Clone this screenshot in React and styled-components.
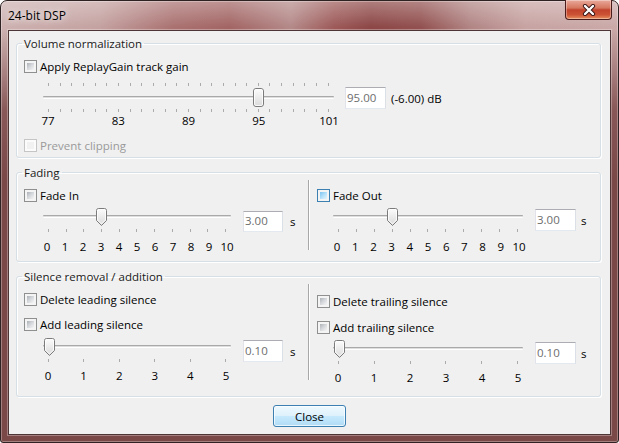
import React from 'react';
import styled, { createGlobalStyle } from 'styled-components';

const Global = createGlobalStyle`
  html, body { margin: 0; padding: 0; background: #ffffff; }
  body {
    font-family: "Open Sans", "Noto Sans", "DejaVu Sans", sans-serif;
    font-size: 11.5px;
    color: #000;
  }
  * { box-sizing: border-box; }
`;

const TITLE_GRADIENT = `linear-gradient(90deg, #cdb2b1 0%, #c4a2a1 16%, #aa7271 28%, #a26564 37%, #b48a89 47%, #9d5a59 54%, #8c4746 60%, #925150 68%, #b18584 76%, #c7a3a2 85%, #caa9a8 100%)`;

const Window = styled.div`
  width: 619px;
  height: 443px;
  display: flex;
  flex-direction: column;
  padding: 0 7px 7px;
  border: 1px solid #2f2222;
  border-radius: 7px 7px 3px 3px;
  background:
    linear-gradient(180deg, rgba(255,255,255,0.3) 0px, rgba(255,255,255,0) 26px),
    linear-gradient(180deg, rgba(124,72,72,0) 28px, rgba(124,72,72,0.85) 110px, #7b4848 180px),
    ${TITLE_GRADIENT};
  box-shadow: inset 0 0 0 1px rgba(255,255,255,0.3);
`;

const TitleBar = styled.div`
  height: 29px;
  flex: none;
  display: flex;
  align-items: flex-start;
`;

const TitleText = styled.div`
  margin-top: 7px;
  font-size: 12px;
  line-height: 15px;
  color: #000;
  text-shadow: 0 0 6px rgba(255,255,255,0.9), 0 0 12px rgba(255,255,255,0.6);
`;

const CaptionClose = styled.div`
  margin: -1px -1px 0 auto;
  width: 47px;
  height: 20px;
  display: flex;
  align-items: center;
  justify-content: center;
  border: 1px solid #4a1c1c;
  border-top: none;
  border-radius: 0 0 4px 4px;
  background: linear-gradient(180deg, #e9a99b 0%, #d6775f 42%, #c2432c 52%, #cc5336 78%, #e8905f 100%);
  box-shadow: inset 0 0 0 1px rgba(255,255,255,0.35);
`;

const Client = styled.div`
  flex: 1;
  display: flex;
  flex-direction: column;
  background: #f0f0f0;
  border: 1px solid #4d3535;
  box-shadow: 0 0 0 1px rgba(255,255,255,0.3);
  padding: 5px 9px 5px 7px;
`;

const Group = styled.fieldset`
  margin: ${p => p.$mt}px 0 0;
  padding: 0;
  min-width: 0;
  border: 1px solid #d5dfe5;
  border-radius: 3px;
  box-shadow: inset 1px 1px 0 #fff, 1px 1px 0 #fff;
`;

const Legend = styled.legend`
  margin-left: 5px;
  padding: 0 2px;
  font-size: 11.5px;
  line-height: 15px;
  color: #1a1a1a;
`;

const Body = styled.div`
  display: flex;
  flex-direction: ${p => (p.$row ? 'row' : 'column')};
  align-items: ${p => (p.$row ? 'stretch' : 'flex-start')};
  padding: ${p => p.$pt || 0}px 0 ${p => p.$pb || 0}px 7px;
`;

const Column = styled.div`
  display: flex;
  flex-direction: column;
  align-items: flex-start;
  width: ${p => p.$w}px;
  padding-top: ${p => p.$pt}px;
`;

const Divider = styled.div`
  width: 1px;
  margin: 0 8px ${p => p.$mb}px;
  background: #a8a8a8;
  box-shadow: 1px 0 0 #fff;
`;

const CheckRow = styled.label`
  display: flex;
  align-items: center;
  gap: 3px;
  height: 13px;
  margin-top: ${p => p.$mt || 0}px;
  line-height: 13px;
  color: ${p => (p.$disabled ? '#9a9a9a' : '#000')};
  white-space: nowrap;
`;

const boxBorder = { normal: '#8e8f8f', hover: '#3c7fb1', disabled: '#c5c5c5' };
const boxFill = {
  normal: 'linear-gradient(135deg, #adb2b8 0%, #d3d6da 45%, #f6f6f6 100%)',
  hover: 'linear-gradient(135deg, #7cc4f3 0%, #b5e0f9 50%, #e4f5fd 100%)',
  disabled: '#f1f1f1',
};

const Box = styled.span`
  position: relative;
  flex: none;
  width: 13px;
  height: 13px;
  border: 1px solid ${p => boxBorder[p.$state]};
  background: ${p => (p.$state === 'disabled' ? '#fbfbfb' : '#f4f4f4')};
  &::after {
    content: '';
    position: absolute;
    inset: 2px;
    background: ${p => boxFill[p.$state]};
  }
`;

const SliderLine = styled.div`
  display: flex;
  align-items: flex-start;
  margin-top: ${p => p.$mt}px;
`;

const SliderCol = styled.div`
  display: flex;
  flex-direction: column;
  width: ${p => p.$w}px;
  margin-left: ${p => p.$indent}px;
`;

const Ticks = styled.div`
  display: flex;
  justify-content: space-between;
  padding: 0 5px;
  margin-top: ${p => p.$mt}px;
  height: 3px;
`;

const Tick = styled.span`
  width: 1px;
  height: 3px;
  background: #ababab;
`;

const TrackRow = styled.div`
  position: relative;
  height: 22px;
  padding-top: ${p => p.$pad}px;
`;

const Track = styled.div`
  height: 3px;
  border-top: 1px solid #a9a9a9;
  border-bottom: 1px solid #ffffff;
  background: #dedede;
  border-radius: 1px;
`;

const ThumbSpot = styled.div`
  position: absolute;
  top: 2px;
  width: 11px;
  height: 19px;
  line-height: 0;
`;

const Labels = styled.div`
  display: flex;
  justify-content: space-between;
  width: ${p => p.$w}px;
  margin-left: ${p => p.$shift}px;
  margin-top: ${p => p.$mt}px;
  line-height: 16px;
  font-size: 11.5px;
`;

const LabelNum = styled.span`
  width: ${p => p.$w}px;
  text-align: center;
`;

const ValueGroup = styled.div`
  display: flex;
  align-items: center;
  margin-top: ${p => p.$mt}px;
  margin-left: ${p => p.$ml}px;
`;

const ValueBox = styled.div`
  width: ${p => p.$w}px;
  height: ${p => p.$h}px;
  padding-left: 1px;
  border: 1px solid;
  border-color: #abadb3 #dbdfe6 #e3e9ef #e2e3ea;
  background: #fff;
  color: #6d6d6d;
  line-height: ${p => p.$h - 3}px;
`;

const Unit = styled.span`
  margin-left: ${p => p.$ml}px;
  white-space: nowrap;
`;

const Footer = styled.div`
  display: flex;
  justify-content: center;
  padding-left: 2px;
  margin-top: 8px;
`;

const Button = styled.button`
  width: 73px;
  height: 22px;
  padding: 0;
  font-family: inherit;
  font-size: 11.5px;
  color: #000;
  border: 1px solid #3c7fb1;
  border-radius: 3px;
  background: linear-gradient(180deg, #eef8fe 0%, #dff2fc 48%, #c6e9fd 52%, #b0dcf5 100%);
  box-shadow: inset 0 0 0 1px rgba(255,255,255,0.7);
`;

function RectThumb() {
  return (
    <svg width="11" height="19" viewBox="0 0 11 19">
      <defs>
        <linearGradient id="rthumb" x1="0" y1="0" x2="0" y2="1">
          <stop offset="0" stopColor="#fdfdfd" />
          <stop offset="1" stopColor="#d9d9d9" />
        </linearGradient>
      </defs>
      <rect x="0.5" y="0.5" width="10" height="18" rx="2.5" fill="url(#rthumb)" stroke="#7b7b7b" />
      <rect x="1.5" y="1.5" width="8" height="16" rx="1.5" fill="none" stroke="#ffffff" strokeOpacity="0.8" />
    </svg>
  );
}

function PointThumb() {
  return (
    <svg width="11" height="19" viewBox="0 0 11 19">
      <defs>
        <linearGradient id="pthumb" x1="0" y1="0" x2="0" y2="1">
          <stop offset="0" stopColor="#fdfdfd" />
          <stop offset="1" stopColor="#d9d9d9" />
        </linearGradient>
      </defs>
      <path d="M0.5 2.5 Q0.5 0.5 2.5 0.5 H8.5 Q10.5 0.5 10.5 2.5 V12.5 L5.5 17.5 L0.5 12.5 Z" fill="url(#pthumb)" stroke="#7b7b7b" />
      <path d="M1.5 2.5 Q1.5 1.5 2.5 1.5 H8.5 Q9.5 1.5 9.5 2.5 V12 L5.5 16 L1.5 12 Z" fill="none" stroke="#ffffff" strokeOpacity="0.8" />
    </svg>
  );
}

function Check({ label, state = 'normal', mt }) {
  return (
    <CheckRow $mt={mt} $disabled={state === 'disabled'}>
      <Box $state={state} />
      <span>{label}</span>
    </CheckRow>
  );
}

function Slider({ width, indent, ticks, topTicks, frac, labels, labelW = 20, rect, trackPad, labelGap }) {
  const span = width - 10;
  const left = 5 + frac * span - 5.5;
  const tickList = Array.from({ length: ticks }, (_, i) => <Tick key={i} />);
  return (
    <SliderCol $w={width} $indent={indent}>
      {topTicks && <Ticks $mt={1}>{tickList}</Ticks>}
      <TrackRow $pad={trackPad}>
        <Track />
        <ThumbSpot style={{ left }}>{rect ? <RectThumb /> : <PointThumb />}</ThumbSpot>
      </TrackRow>
      <Ticks $mt={1}>{tickList}</Ticks>
      <Labels $w={span + labelW} $shift={5 - labelW / 2} $mt={labelGap}>
        {labels.map(l => (
          <LabelNum key={l} $w={labelW}>{l}</LabelNum>
        ))}
      </Labels>
    </SliderCol>
  );
}

function Value({ value, unit, mt, ml, w = 40, h = 21, unitMl }) {
  return (
    <ValueGroup $mt={mt} $ml={ml}>
      <ValueBox $w={w} $h={h}>{value}</ValueBox>
      <Unit $ml={unitMl}>{unit}</Unit>
    </ValueGroup>
  );
}

const fadeLabels = [0, 1, 2, 3, 4, 5, 6, 7, 8, 9, 10];
const silLabels = [0, 1, 2, 3, 4, 5];

export default function App() {
  return (
    <>
      <Global />
      <Window>
        <TitleBar>
          <TitleText>24-bit DSP</TitleText>
          <CaptionClose>
            <svg width="14" height="12" viewBox="0 0 14 12">
              <path d="M3 2 L11 10 M11 2 L3 10" stroke="#3a1414" strokeWidth="4.2" strokeLinecap="round" />
              <path d="M3 2 L11 10 M11 2 L3 10" stroke="#ffffff" strokeWidth="2.4" strokeLinecap="round" />
            </svg>
          </CaptionClose>
        </TitleBar>
        <Client>
          <Group $mt={0}>
            <Legend>Volume normalization</Legend>
            <Body $pt={9} $pb={5}>
              <Check label="Apply ReplayGain track gain" />
              <SliderLine $mt={9}>
                <Slider width={291} indent={19} ticks={25} topTicks rect frac={18 / 24}
                  labels={[77, 83, 89, 95, 101]} trackPad={10} labelGap={1} />
                <Value value="95.00" unit="(-6.00) dB" mt={5} ml={11} w={41} h={22} unitMl={5} />
              </SliderLine>
              <Check label="Prevent clipping" state="disabled" mt={10} />
            </Body>
          </Group>

          <Group $mt={7}>
            <Legend>Fading</Legend>
            <Body $row $pb={6}>
              <Column $w={276} $pt={9}>
                <Check label="Fade In" />
                <SliderLine $mt={4}>
                  <Slider width={188} indent={19} ticks={11} frac={0.3} labels={fadeLabels} trackPad={9} labelGap={7} />
                  <Value value="3.00" unit="s" mt={5} ml={12} w={40} h={21} unitMl={7} />
                </SliderLine>
              </Column>
              <Divider $mb={5} />
              <Column $w={276} $pt={9}>
                <Check label="Fade Out" state="hover" />
                <SliderLine $mt={4}>
                  <Slider width={190} indent={16} ticks={11} frac={0.3} labels={fadeLabels} trackPad={9} labelGap={7} />
                  <Value value="3.00" unit="s" mt={3} ml={12} w={41} h={22} unitMl={5} />
                </SliderLine>
              </Column>
            </Body>
          </Group>

          <Group $mt={7}>
            <Legend>Silence removal / addition</Legend>
            <Body $row $pb={10}>
              <Column $w={276} $pt={9}>
                <Check label="Delete leading silence" />
                <Check label="Add leading silence" mt={12} />
                <SliderLine $mt={5}>
                  <Slider width={188} indent={19} ticks={6} frac={0.01} labels={silLabels} trackPad={9} labelGap={6} />
                  <Value value="0.10" unit="s" mt={4} ml={12} w={40} h={22} unitMl={7} />
                </SliderLine>
              </Column>
              <Divider $mb={6} />
              <Column $w={276} $pt={11}>
                <Check label="Delete trailing silence" />
                <Check label="Add trailing silence" mt={13} />
                <SliderLine $mt={4}>
                  <Slider width={190} indent={16} ticks={6} frac={0.01} labels={silLabels} trackPad={9} labelGap={6} />
                  <Value value="0.10" unit="s" mt={4} ml={12} w={41} h={22} unitMl={5} />
                </SliderLine>
              </Column>
            </Body>
          </Group>

          <Footer>
            <Button>Close</Button>
          </Footer>
        </Client>
      </Window>
    </>
  );
}
